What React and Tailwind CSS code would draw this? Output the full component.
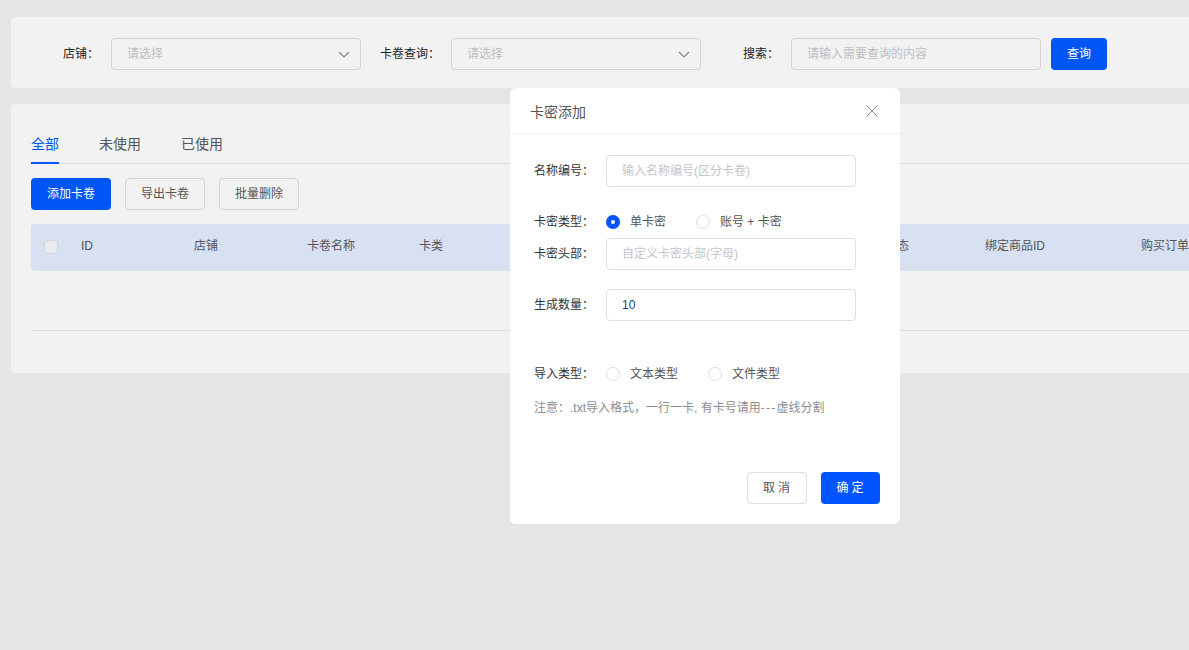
import React from 'react';

const FONT = "font-['Liberation_Sans','Noto_Sans_CJK_SC',sans-serif]";

const Chevron = () => (
  <svg width="12" height="7" viewBox="0 0 12 7" fill="none" stroke="#7d8088" strokeWidth="1.1">
    <path d="M1 1 L6 6 L11 1" />
  </svg>
);

const Select = ({ className }) => (
  <div className={`flex h-8 w-[250px] items-center justify-between rounded border border-[#d3d4da] pl-[15px] pr-[10px] text-xs text-[#bcbec3] ${className || ''}`}>
    <span>请选择</span>
    <Chevron />
  </div>
);

const FormLabel = ({ children }) => (
  <span className="w-[72px] shrink-0 text-xs text-[#333]">{children}：</span>
);

const Radio = ({ checked, label, className }) => (
  <div className={`flex items-center text-xs text-[#555] ${className || ''}`}>
    {checked ? (
      <span className="mr-[10px] flex h-[14px] w-[14px] items-center justify-center rounded-full bg-[#0055ff]">
        <span className="h-1 w-1 rounded-full bg-white" />
      </span>
    ) : (
      <span className="mr-[10px] h-[14px] w-[14px] rounded-full border border-[#dcdee4]" />
    )}
    {label}
  </div>
);

const FieldInput = ({ placeholder, value }) => (
  <div className={`flex h-8 w-[250px] items-center rounded border border-[#dcdee4] px-[15px] text-xs ${value ? 'text-[#1f3b6e]' : 'text-[#c3c5ca]'}`}>
    {value || placeholder}
  </div>
);

const columns = [
  ['ID', 'w-[113px]'],
  ['店铺', 'w-[113px]'],
  ['卡卷名称', 'w-[112px]'],
  ['卡类', 'w-[113px]'],
  ['', 'w-[113px]'],
  ['', 'w-[113px]'],
  ['', 'w-[127px]'],
  ['状态', 'w-[100px]'],
  ['绑定商品ID', 'w-[156px]'],
  ['购买订单', 'w-[113px]'],
];

export default function App() {
  return (
    <div className={`relative h-[650px] w-[1189px] overflow-hidden bg-[#e4e5e7] pl-[11px] pt-[17px] ${FONT}`}>
      <div className="absolute left-0 top-0 h-px w-full bg-[#e0e2e8]" />

      {/* filter bar */}
      <div className="flex h-[71px] w-[1300px] items-center rounded-tl rounded-bl bg-[#f2f2f2] pt-[3px]">
        <span className="ml-[52px] w-[48px] text-xs text-[#222]">店铺：</span>
        <Select />
        <span className="ml-[19px] w-[71px] text-xs text-[#222]">卡卷查询：</span>
        <Select />
        <span className="ml-[42px] w-[48px] text-xs text-[#222]">搜索：</span>
        <div className="flex h-8 w-[250px] items-center rounded border border-[#d3d4da] px-[15px] text-xs text-[#bcbec3]">
          请输入需要查询的内容
        </div>
        <button className="ml-[10px] h-8 w-14 rounded bg-[#0055f5] text-xs text-white">查询</button>
      </div>

      {/* list panel */}
      <div className="mt-4 h-[269px] w-[1300px] rounded-tl rounded-bl bg-[#f2f2f2] pl-5 pt-[24px]">
        <div className="flex h-9 w-[1270px] items-start border-b border-[#d9dadc] text-sm text-[#555]">
          <div className="flex h-9 w-7 justify-center border-b-2 border-[#0055f5] pt-[6px] text-[#0055f5]">全部</div>
          <div className="ml-10 pt-[6px]">未使用</div>
          <div className="ml-10 pt-[6px]">已使用</div>
        </div>

        <div className="mt-[14px] flex gap-[14px] text-xs">
          <button className="h-8 w-20 rounded bg-[#0055f5] text-white">添加卡卷</button>
          <button className="h-8 w-20 rounded border border-[#d3d4da] text-[#555]">导出卡卷</button>
          <button className="h-8 w-20 rounded border border-[#d3d4da] text-[#555]">批量删除</button>
        </div>

        <div className="mt-[14px] flex h-[47px] w-[1270px] items-center rounded-sm bg-[#d8e1f2] pl-[13px] text-xs text-[#555]">
          <span className="mb-[1px] mr-[23px] h-[14px] w-[14px] rounded-sm border border-[#d3d4da] bg-[#e9ebf0]" />
          {columns.map(([title, width], i) => (
            <div key={i} className={`shrink-0 pb-[3px] ${width}`}>{title}</div>
          ))}
        </div>

        <div className="mt-[59px] h-px w-[1270px] bg-[#dcdce6]" />
      </div>

      {/* dialog */}
      <div className="absolute left-[510px] top-[88px] h-[436px] w-[390px] rounded-md bg-white">
        <div className="flex h-[46px] items-center justify-between border-b border-[#eeeff1] pl-5 pr-[22px]">
          <span className="pt-[3px] text-sm text-[#555]">卡密添加</span>
          <svg width="12" height="12" viewBox="0 0 12 12" fill="none" stroke="#8a8d94" strokeWidth="1" className="mt-[1px]">
            <path d="M0.5 0.5 L11.5 11.5 M11.5 0.5 L0.5 11.5" />
          </svg>
        </div>

        <div className="pl-6 pt-[21px]">
          <div className="flex h-8 items-center">
            <FormLabel>名称编号</FormLabel>
            <FieldInput placeholder="输入名称编号(区分卡卷)" />
          </div>
          <div className="mt-[26px] flex h-[17px] items-center">
            <FormLabel>卡密类型</FormLabel>
            <Radio checked label="单卡密" />
            <Radio label="账号 + 卡密" className="ml-[30px]" />
          </div>
          <div className="mt-[8px] flex h-8 items-center">
            <FormLabel>卡密头部</FormLabel>
            <FieldInput placeholder="自定义卡密头部(字母)" />
          </div>
          <div className="mt-[19px] flex h-8 items-center">
            <FormLabel>生成数量</FormLabel>
            <FieldInput value="10" />
          </div>
          <div className="mt-[44px] flex h-[17px] items-center">
            <FormLabel>导入类型</FormLabel>
            <Radio label="文本类型" />
            <Radio label="文件类型" className="ml-[30px]" />
          </div>
          <p className="mt-[18px] text-xs text-[#8b8d92]">
            注意：.txt导入格式，一行一卡, 有卡号请用<span className="tracking-[1.3px]">---</span>虚线分割
          </p>
        </div>

        <div className="absolute bottom-5 right-5 flex gap-[14px] text-xs">
          <button className="h-8 w-[60px] rounded border border-[#dcdee4] pl-[2px] tracking-[3px] text-[#555]">取消</button>
          <button className="h-8 w-[59px] rounded bg-[#0055ff] pl-[2px] tracking-[3px] text-white">确定</button>
        </div>
      </div>
    </div>
  );
}
